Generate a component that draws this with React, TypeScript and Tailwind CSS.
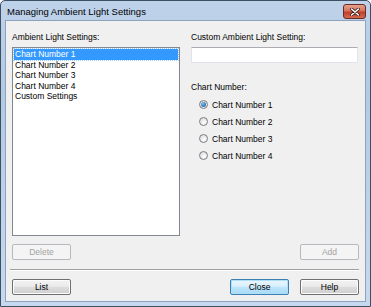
import { useState } from 'react'

const items = ['Chart Number 1', 'Chart Number 2', 'Chart Number 3', 'Chart Number 4', 'Custom Settings']
const charts = ['Chart Number 1', 'Chart Number 2', 'Chart Number 3', 'Chart Number 4']

function Button({ label, disabled, primary, className = '' }: { label: string; disabled?: boolean; primary?: boolean; className?: string }) {
  const tone = disabled
    ? 'border-[#b5b9bd] bg-[#f4f4f4] text-[#a3a3a3]'
    : primary
      ? 'border-[#3c7fb1] bg-[linear-gradient(#eaf6fd_0%,#d9f0fc_45%,#bee6fd_50%,#a7d9f5_100%)] text-black shadow-[inset_0_0_0_1px_#b0dff8]'
      : 'border-[#707070] bg-[linear-gradient(#f2f2f2_0%,#ebebeb_45%,#dddddd_50%,#cfcfcf_100%)] text-black shadow-[inset_0_0_0_1px_#fcfcfc]'
  return (
    <button
      type="button"
      className={`flex h-[16px] w-[59px] items-center justify-center rounded-[2px] border text-[8.5px] leading-none ${tone} ${className}`}
    >
      {label}
    </button>
  )
}

function Radio({ checked }: { checked: boolean }) {
  return (
    <span className="flex h-[9px] w-[9px] items-center justify-center rounded-full border border-[#7a7d82] bg-[radial-gradient(circle_at_60%_65%,#ffffff_0%,#d4d4d4_100%)]">
      {checked && <span className="h-[5px] w-[5px] rounded-full bg-[radial-gradient(circle_at_40%_35%,#7cc8f5_0%,#0f4f99_90%)]" />}
    </span>
  )
}

export default function App() {
  const [selected] = useState(0)
  const [chart] = useState(0)

  return (
    <div className="flex h-[307px] w-[371px] flex-col overflow-hidden rounded-t-[5px] border border-[#3f4f63] bg-[linear-gradient(#bed2ea,#b4cae3_30%,#c7d9ee)] font-['Liberation_Sans',Arial,sans-serif]">
      {/* title bar */}
      <div className="flex h-[19px] shrink-0 items-center justify-between pl-[6px] pr-[4px] pt-[2px]">
        <span className="text-[9.5px] leading-none text-black">Managing Ambient Light Settings</span>
        <span className="flex h-[15px] w-[23px] items-center justify-center rounded-[3px] border border-[#6b2a22] bg-[linear-gradient(#e8a18e_0%,#d4745f_45%,#c0402a_55%,#d46b52_100%)]">
          <svg width="10" height="8" viewBox="0 0 10 8">
            <path d="M1.5 1 L8.5 7 M8.5 1 L1.5 7" stroke="#3b1a14" strokeWidth="3" strokeLinecap="round" />
            <path d="M1.5 1 L8.5 7 M8.5 1 L1.5 7" stroke="#ffffff" strokeWidth="1.6" strokeLinecap="round" />
          </svg>
        </span>
      </div>

      {/* client area */}
      <div className="mx-[4px] mb-[4px] flex flex-1 flex-col border border-[#8da2bc] bg-[#f0f0f0] px-[6px] pt-[11px] text-[8.5px] leading-[10px] text-black">
        <div className="grid grid-cols-[168px_167px] gap-x-[11px]">
          <div className="flex flex-col">
            <span>Ambient Light Settings:</span>
            <div className="mt-[5px] h-[189px] border border-[#828790] bg-white p-[1px]">
              {items.map((it, i) => (
                <div
                  key={it}
                  className={`h-[10.5px] pl-[1px] leading-[10.5px] ${i === selected ? 'bg-[#3399ff] text-white outline outline-1 outline-dotted outline-[#99ccff]' : ''}`}
                >
                  {it}
                </div>
              ))}
            </div>
          </div>

          <div className="flex flex-col">
            <span>Custom Ambient Light Setting:</span>
            <div className="mt-[5px] h-[16px] border border-[#e2e3ea] border-t-[#abadb3] bg-white" />
            <span className="mt-[19px]">Chart Number:</span>
            <div className="mt-[4px] flex flex-col pl-[8px]">
              {charts.map((c, i) => (
                <div key={c} className="flex h-[17px] items-center gap-[4px]">
                  <Radio checked={i === chart} />
                  <span>{c}</span>
                </div>
              ))}
            </div>
          </div>
        </div>

        <div className="mt-[8px] flex justify-between">
          <Button label="Delete" disabled />
          <Button label="Add" disabled />
        </div>

        <div className="ml-[-2px] mt-[9px] h-[2px] border-t border-b border-t-[#a0a0a0] border-b-white" />

        <div className="mt-[8px] flex items-center justify-between">
          <Button label="List" />
          <div className="flex gap-[11px]">
            <Button label="Close" primary className="w-[58px]" />
            <Button label="Help" />
          </div>
        </div>
      </div>
    </div>
  )
}
